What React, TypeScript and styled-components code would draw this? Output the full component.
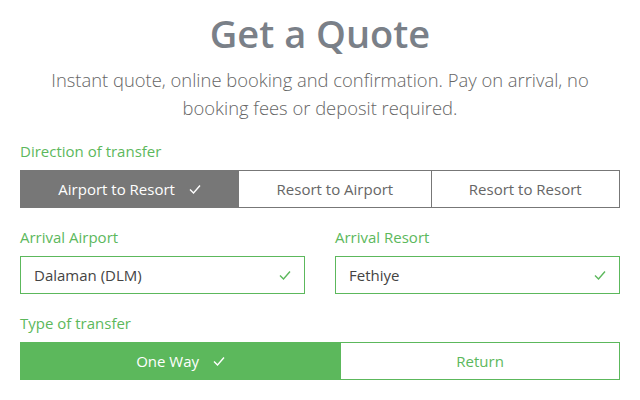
import { useState } from 'react';
import styled, { createGlobalStyle } from 'styled-components';

const GlobalStyle = createGlobalStyle`
  body {
    margin: 0;
    background: #fff;
    font-family: 'Open Sans', 'Noto Sans', sans-serif;
  }
`;

const green = '#5cb85c';
const gray = '#777777';

const Page = styled.div`
  padding: 0 20px;
`;

const Title = styled.h1`
  margin: 0;
  padding-top: 11px;
  text-align: center;
  font-size: 38px;
  line-height: 44px;
  font-weight: 600;
  color: #7a8088;
`;

const Lead = styled.p`
  margin: 11px auto 0;
  max-width: 580px;
  text-align: center;
  font-size: 18.4px;
  line-height: 28px;
  font-weight: 300;
  color: #666;
`;

const Field = styled.div`
  margin-top: 18px;
`;

const Label = styled.div`
  font-size: 15px;
  line-height: 22px;
  color: ${green};
  margin-bottom: 8px;
`;

const Segments = styled.div<{ $tone: string }>`
  display: flex;
  border: 1px solid ${(p) => p.$tone};
`;

const Segment = styled.button<{ $tone: string; $active: boolean; $textTone: string }>`
  flex: 1 1 auto;
  display: flex;
  align-items: center;
  justify-content: center;
  gap: 14px;
  height: 36px;
  padding: 0 20px;
  border: none;
  border-left: 1px solid ${(p) => p.$tone};
  background: ${(p) => (p.$active ? p.$tone : '#fff')};
  color: ${(p) => (p.$active ? '#fff' : p.$textTone)};
  font-family: inherit;
  font-size: 15px;
  cursor: pointer;

  &:first-child {
    border-left: none;
  }
`;

const Columns = styled.div`
  display: grid;
  grid-template-columns: 1fr 1fr;
  column-gap: 30px;
`;

const InputBox = styled.div`
  display: flex;
  align-items: center;
  justify-content: space-between;
  height: 36px;
  padding: 0 13px;
  border: 1px solid ${green};
  color: #444;
  font-size: 15px;
`;

const Tick = ({ color }: { color: string }) => (
  <svg width="12" height="10" viewBox="0 0 12 10" fill="none">
    <polyline points="1,5.5 4.5,9 11,1.5" stroke={color} strokeWidth="1.4" />
  </svg>
);

const directions = ['Airport to Resort', 'Resort to Airport', 'Resort to Resort'];
const types = ['One Way', 'Return'];

const App = () => {
  const [direction, setDirection] = useState<string>(directions[0]);
  const [type, setType] = useState<string>(types[0]);

  return (
    <Page>
      <GlobalStyle />
      <Title>Get a Quote</Title>
      <Lead>
        Instant quote, online booking and confirmation. Pay on arrival, no booking fees or deposit
        required.
      </Lead>

      <Field>
        <Label>Direction of transfer</Label>
        <Segments $tone={gray}>
          {directions.map((d) => (
            <Segment
              key={d}
              $tone={gray}
              $textTone="#666"
              $active={d === direction}
              onClick={() => setDirection(d)}
            >
              {d}
              {d === direction && <Tick color="#fff" />}
            </Segment>
          ))}
        </Segments>
      </Field>

      <Columns>
        <Field>
          <Label>Arrival Airport</Label>
          <InputBox>
            Dalaman (DLM)
            <Tick color={green} />
          </InputBox>
        </Field>
        <Field>
          <Label>Arrival Resort</Label>
          <InputBox>
            Fethiye
            <Tick color={green} />
          </InputBox>
        </Field>
      </Columns>

      <Field>
        <Label>Type of transfer</Label>
        <Segments $tone={green}>
          {types.map((t) => (
            <Segment
              key={t}
              $tone={green}
              $textTone={green}
              $active={t === type}
              onClick={() => setType(t)}
            >
              {t}
              {t === type && <Tick color="#fff" />}
            </Segment>
          ))}
        </Segments>
      </Field>
    </Page>
  );
};

export default App;
